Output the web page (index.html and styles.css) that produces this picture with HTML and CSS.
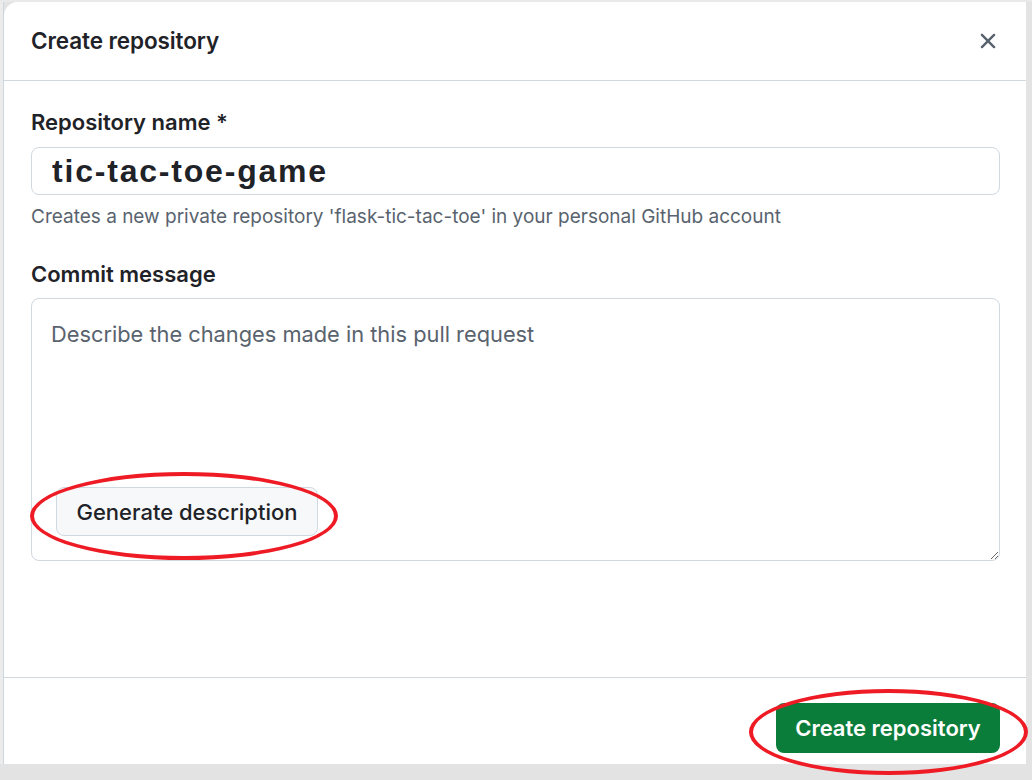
FILE: index.html
```html
<!DOCTYPE html>
<html lang="en">
<head>
<meta charset="utf-8">
<title>Create repository</title>
<link rel="stylesheet" href="styles.css">
</head>
<body>
<div class="page">
  <div class="backdrop-strip"></div>
  <div class="dialog">
    <div class="dialog-header">
      <h1 class="dialog-title">Create repository</h1>
      <button class="close-btn" aria-label="Close">
        <svg width="26" height="26" viewBox="0 0 16 16" fill="#59636e"><path d="M3.72 3.72a.75.75 0 0 1 1.06 0L8 6.94l3.22-3.220a.749.749 0 0 1 1.275.326.749.749 0 0 1-.215.734L9.06 8l3.22 3.22a.749.749 0 0 1-.326 1.275.749.749 0 0 1-.734-.215L8 9.06l-3.22 3.22a.751.751 0 0 1-1.042-.018.751.751 0 0 1-.018-1.042L6.94 8 3.72 4.78a.75.75 0 0 1 0-1.06Z"/></svg>
      </button>
    </div>
    <div class="dialog-body">
      <label class="field-label" for="repo">Repository name *</label>
      <div class="input-box"><input id="repo" class="text-input" type="text" value="tic-tac-toe-game"></div>
      <p class="helper">Creates a new private repository 'flask-tic-tac-toe' in your personal GitHub account</p>
      <label class="field-label commit-label" for="msg">Commit message</label>
      <div class="textarea-wrap">
        <textarea id="msg" class="textarea" placeholder="Describe the changes made in this pull request"></textarea>
        <div class="gen-wrap">
          <button class="gen-btn">Generate description</button>
          <div class="ring ring-gen"></div>
        </div>
      </div>
    </div>
    <div class="dialog-footer">
      <div class="create-wrap">
        <button class="create-btn">Create repository</button>
        <div class="ring ring-create"></div>
      </div>
    </div>
  </div>
</div>
</body>
</html>
```

FILE: styles.css
```css
* { box-sizing: border-box; }
html, body { margin: 0; padding: 0; }
body {
  background: #e3e3e3;
  font-family: Inter, "Liberation Sans", Arial, sans-serif;
  color: #1f2328;
  width: 1032px;
  height: 780px;
  overflow: hidden;
}
.page {
  display: flex;
  padding-top: 2px;
  height: 780px;
  background: linear-gradient(#e9e9e9, #e9e9e9) top / 100% 2px no-repeat, #e3e3e3;
}
.backdrop-strip {
  width: 4px;
  height: 762px;
  background: #ececec;
  border-right: 1px solid #cdd5de;
}
.dialog {
  width: 1022px;
  height: 762px;
  background: #fff;
  border-top-left-radius: 14px;
  display: flex;
  flex-direction: column;
}
.dialog-header {
  height: 79px;
  border-bottom: 1px solid #d1d9e0;
  display: flex;
  align-items: center;
  justify-content: space-between;
  padding: 0 25px 0 27px;
}
.dialog-title {
  margin: 0;
  font-size: 22.5px;
  font-weight: 600;
  line-height: 26px;
  letter-spacing: -0.1px;
}
.close-btn {
  border: 0;
  background: transparent;
  padding: 0;
  width: 26px;
  height: 26px;
  display: flex;
  align-items: center;
  justify-content: center;
  cursor: pointer;
}
.dialog-body {
  flex: 1;
  padding: 28px 26px 0 27px;
  display: flex;
  flex-direction: column;
}
.field-label {
  display: block;
  font-size: 22px;
  font-weight: 600;
  line-height: 26px;
  margin-bottom: 12px;
}
.commit-label { margin-top: 32px; margin-bottom: 11px; }
.input-box {
  height: 48px;
  border: 1px solid #d1d9e0;
  border-radius: 8px;
  display: flex;
  align-items: center;
  padding-left: 20px;
}
.text-input {
  border: 0;
  outline: none;
  width: 100%;
  font-family: "Liberation Sans", Arial, sans-serif;
  font-weight: 700;
  font-size: 32px;
  letter-spacing: 1.8px;
  color: #1f2328;
  background: transparent;
  padding: 0;
}
.helper {
  margin: 10px 0 0;
  font-size: 19px;
  line-height: 24px;
  color: #59636e;
}
.textarea-wrap {
  position: relative;
  height: 263px;
}
.textarea {
  display: block;
  width: 100%;
  height: 263px;
  border: 1px solid #d1d9e0;
  border-radius: 8px;
  padding: 21px 19px;
  font-family: Inter, "Liberation Sans", Arial, sans-serif;
  font-size: 21.8px;
  line-height: 28px;
  color: #1f2328;
  outline: none;
  resize: vertical;
}
.textarea::placeholder { color: #59636e; opacity: 1; }
.gen-wrap {
  position: absolute;
  left: 25px;
  top: 189px;
}
.gen-btn {
  width: 262px;
  height: 49px;
  background: #f6f8fa;
  border: 1px solid #d1d9e0;
  border-radius: 8px;
  font-family: Inter, "Liberation Sans", Arial, sans-serif;
  font-size: 22px;
  font-weight: 500;
  color: #1f2328;
  padding: 0;
}
.ring {
  position: absolute;
  border: 4px solid #ee1b24;
  border-radius: 50%;
  pointer-events: none;
}
.ring-gen {
  left: -26px;
  top: -15px;
  width: 308px;
  height: 88px;
}
.dialog-footer {
  height: 87px;
  border-top: 1px solid #d1d9e0;
  display: flex;
  justify-content: flex-end;
  align-items: flex-start;
  padding: 25px 26px 0 0;
}
.create-wrap { position: relative; }
.create-btn {
  width: 224px;
  height: 50px;
  background: #0b7d3b;
  color: #fff;
  border: 0;
  border-radius: 8px;
  font-family: Inter, "Liberation Sans", Arial, sans-serif;
  font-size: 22px;
  font-weight: 600;
  padding: 0;
}
.ring-create {
  left: -27px;
  top: -14px;
  width: 279px;
  height: 86px;
}
```
